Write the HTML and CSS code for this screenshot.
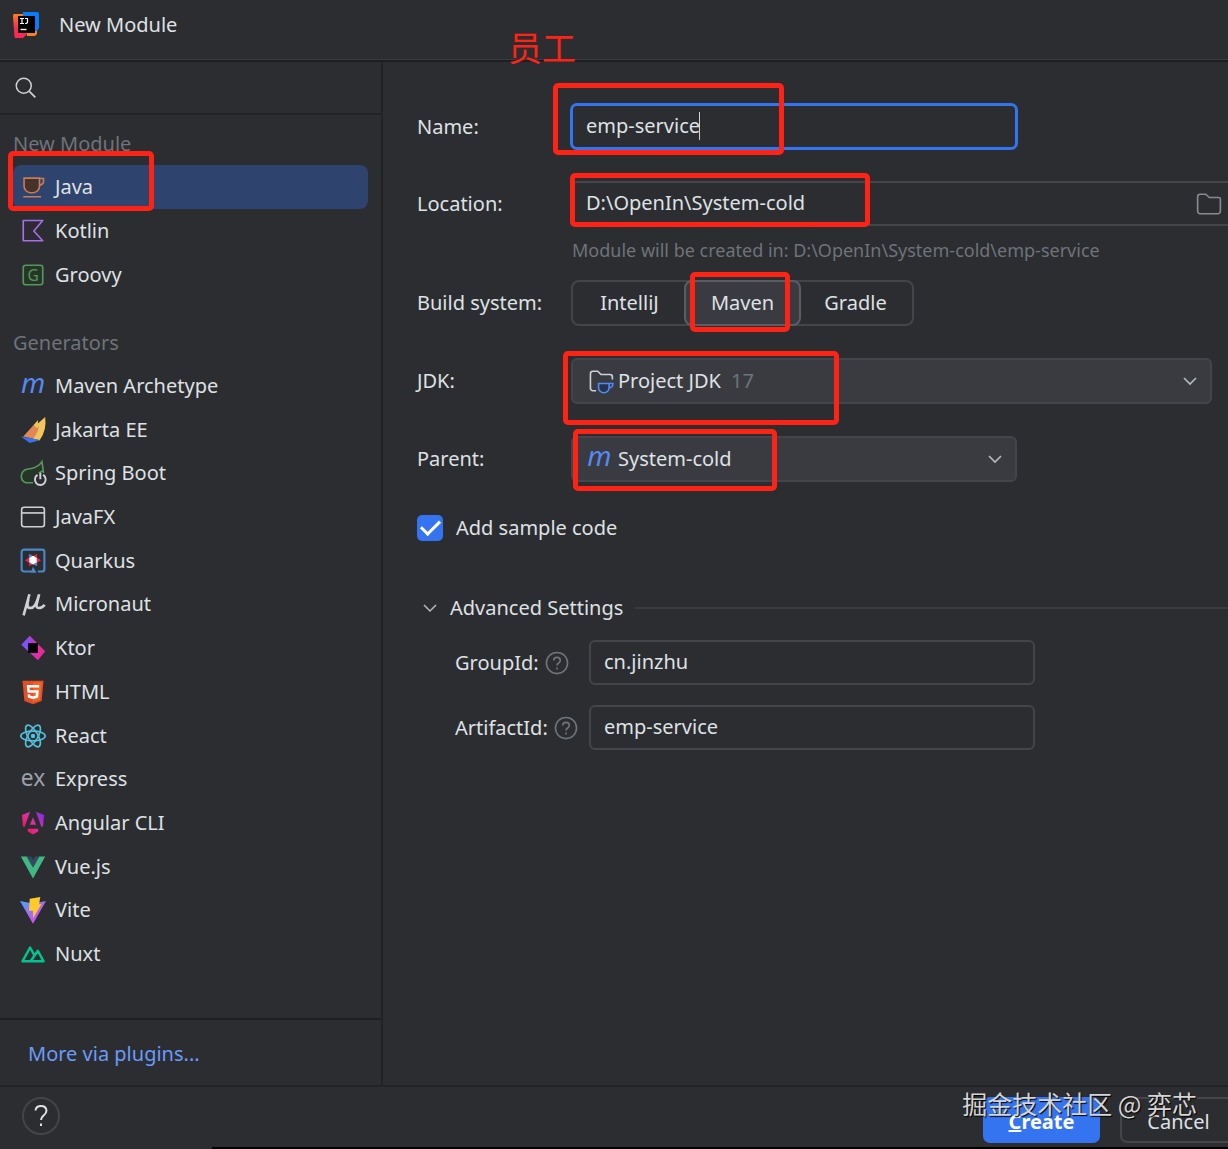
FILE: index.html
```html
<!DOCTYPE html>
<html lang="en">
<head>
    <meta charset="UTF-8">
    <meta name="viewport" content="width=device-width, initial-scale=1.0">
    <title>New Module</title>
    <link rel="stylesheet" href="styles.css">
</head>
<body>
    <header class="titlebar">
        <svg class="logo" viewBox="0 0 28 28" aria-hidden="true">
            <defs>
                <linearGradient id="ij-left" x1="0" y1="0" x2="0" y2="1">
                    <stop offset="0" stop-color="#fc801d"/>
                    <stop offset="0.6" stop-color="#fe2857"/>
                </linearGradient>
            </defs>
            <path fill="url(#ij-left)" d="M2 3h10v23l-8 1q-1.500 0-1.600-1.500L1 5q0-2 1-2z"/>
            <path fill="#fe2857" d="M4 20h14l-4 4-3 3H4z"/>
            <path fill="#fc801d" d="M15 20h10v3l-2 2h-8z"/>
            <path fill="#087cfa" d="M11 1h14q2 0 2 2v14l-2 3H11z"/>
            <rect x="6" y="5" width="17" height="17" fill="#000"/>
            <path d="M8 7.500h4M10 7.500v5M8 12.500h4M13 7.500h3M15.500 7.500v3.500q0 1.500-2.500 1.500" fill="none" stroke="#fff" stroke-width="1.200"/>
            <path d="M8.500 18.500h6" stroke="#fff" stroke-width="1.400"/>
        </svg>
        <h1>New Module</h1>
    </header>

    <div class="content">
        <aside class="sidebar">
            <label class="search">
                <svg viewBox="0 0 16 16" aria-hidden="true"><circle cx="6.500" cy="6.500" r="5" fill="none" stroke="#ced0d6"/><path d="M10.200 10.200l4 4" stroke="#ced0d6" stroke-width="1.200"/></svg>
                <input type="text" aria-label="Search">
            </label>

            <nav class="types">
                <h2>New Module</h2>
                <ul>
                    <li><a href="#" class="selected">
                        <svg class="icon" viewBox="0 0 16 16"><path d="M2.500 2.500h9.500v5a4 4 0 0 1-4 4h-1.500a4 4 0 0 1-4-4z" fill="#45322b" stroke="#c77d55"/><path d="M12 2.800h2.500v1.700q0 2-2.800 2.500M2 14h11" fill="none" stroke="#c77d55"/></svg>
                        Java</a></li>
                    <li><a href="#">
                        <svg class="icon" viewBox="0 0 16 16"><path d="M2 1.500h12L8.500 8l5.500 6H2z" fill="#2f2936" stroke="#a571e6" stroke-linejoin="round"/></svg>
                        Kotlin</a></li>
                    <li><a href="#">
                        <svg class="icon" viewBox="0 0 16 16"><rect x="2" y="2" width="12" height="12" rx="1.500" fill="#253627" stroke="#57965c"/><text x="8" y="11.400" text-anchor="middle" font-size="9.500" fill="#57965c">G</text></svg>
                        Groovy</a></li>
                </ul>

                <h2 class="second">Generators</h2>
                <ul class="generators">
                    <li><a href="#">
                        <svg class="icon" viewBox="0 0 16 16"><text class="slanted" x="8" y="12" text-anchor="middle" font-size="17" fill="#548af7">m</text></svg>
                        Maven Archetype</a></li>
                    <li><a href="#">
                        <svg class="icon" viewBox="0 0 16 16"><path d="M2 12L11 2v10.500l-2 1z" fill="#e08855"/><path d="M8.500 5L11 2v5z" fill="#f2c55c"/><path d="M15.500 0q1.200 8-3.500 14.500l-4-1Q12 9 11 4z" fill="#f2c55c"/><path d="M.5 12l11.500 2q-2 1-3 1.200L6 16z" fill="#3574f0"/></svg>
                        Jakarta EE</a></li>
                    <li><a href="#">
                        <svg class="icon" viewBox="0 0 16 16"><path d="M13.500 1l1 7M8 14H3.500Q.8 13 .8 10 1 6 5 5.500 11 5 13.500 1l.8 5.500Q9 9 8.500 14z" fill="#253627" stroke="#57965c"/><path d="M8 8h8v8H8z" fill="#2b2d30"/><path d="M10.800 9.200a3.300 3.300 0 1 0 3.400 0M12.500 7.800v4" fill="none" stroke="#ced0d6" stroke-width="1.200"/></svg>
                        Spring Boot</a></li>
                    <li><a href="#">
                        <svg class="icon" viewBox="0 0 16 16"><rect x="1" y="2" width="14" height="12" rx="1.500" fill="none" stroke="#ced0d6"/><path d="M1 5.500h14" stroke="#ced0d6"/></svg>
                        JavaFX</a></li>
                    <li><a href="#">
                        <svg class="icon" viewBox="0 0 16 16"><path d="M7 14.500H2.500a1.500 1.500 0 0 1-1.500-1.500V2.500A1.500 1.500 0 0 1 2.500 1h11A1.500 1.500 0 0 1 15 2.500V13a1.500 1.500 0 0 1-1.500 1.500H11" fill="none" stroke="#4a88c7" stroke-width="1.300"/><path d="M8 11.500l2.200 3.700H6.500z" fill="#4a88c7"/><path d="M5.500 3.500L8 5l2.500-1.500V6l2.500 1.500L10.500 9v2L8 10l-2.500 1V9L3 7.500 5.500 6z" fill="#e8274b"/><path d="M5.500 3.500L8 5 5.500 6.500zM10.500 11L8 10l2.500-1.500z" fill="#4a88c7"/><path d="M8 4.700l2.300 1.400v2.700L8 10.200 5.700 8.800V6.100z" fill="#fff"/></svg>
                        Quarkus</a></li>
                    <li><a href="#">
                        <svg class="icon" viewBox="0 0 16 16"><path d="M5.800 2L2.200 15M5.200 5Q3.500 10.500 6.500 10.500 9.500 10.500 11.500 3M11.800 2L10.300 8Q9.700 10.500 11.500 10.500 13.500 10.500 15.200 8.500" fill="none" stroke="#ced0d6" stroke-width="1.600"/></svg>
                        Micronaut</a></li>
                    <li><a href="#">
                        <svg class="icon" viewBox="0 0 16 16"><defs><linearGradient id="ktor"><stop offset="0.200" stop-color="#7f52ff"/><stop offset="0.700" stop-color="#e72b99"/></linearGradient></defs><path d="M6 .5L15.500 10 11 15.500.8 6z" fill="url(#ktor)"/><path d="M5 5h6v6H5z" fill="#000"/></svg>
                        Ktor</a></li>
                    <li><a href="#">
                        <svg class="icon" viewBox="0 0 16 16"><path d="M1.500 1h13l-1.200 12.500L8 15.500l-5.300-2z" fill="#e44d26"/><path d="M8 2h5.400l-1 10.700L8 14.300z" fill="#f16529"/><path d="M11.800 4.500H5l.3 3.200h5.400l-.3 3.100-2.400.8-2.400-.8-.1-1.300" fill="none" stroke="#fff" stroke-width="1.600"/></svg>
                        HTML</a></li>
                    <li><a href="#">
                        <svg class="icon" viewBox="0 0 16 16"><g fill="none" stroke="#53c1de"><ellipse cx="8" cy="8" rx="7.500" ry="3"/><ellipse cx="8" cy="8" rx="7.500" ry="3" transform="rotate(60 8 8)"/><ellipse cx="8" cy="8" rx="7.500" ry="3" transform="rotate(120 8 8)"/></g><circle cx="8" cy="8" r="1.400" fill="#53c1de"/></svg>
                        React</a></li>
                    <li><a href="#">
                        <svg class="icon" viewBox="0 0 16 16"><text x="8" y="12" text-anchor="middle" font-size="14" fill="#9da0a8">ex</text></svg>
                        Express</a></li>
                    <li><a href="#">
                        <svg class="icon" viewBox="0 0 16 16"><defs><linearGradient id="ng" gradientUnits="userSpaceOnUse" x1="2" y1="12" x2="14" y2="3"><stop offset="0" stop-color="#f0145a"/><stop offset="0.500" stop-color="#e02fa0"/><stop offset="1" stop-color="#8a2be8"/></linearGradient></defs><path d="M1.200 3L6.200 1 2.800 10.500 1.800 10zM14.800 3L9.800 1l3.400 9.500 1-.5zM8 4.500l1.900 4.500H6.100zM4.800 11.500h6.400v1.700L8 15l-3.200-1.800z" fill="url(#ng)"/></svg>
                        Angular CLI</a></li>
                    <li><a href="#">
                        <svg class="icon" viewBox="0 0 16 16"><path d="M.5 1.500h4L8 7.500l3.500-6h4L8 15z" fill="#41b883"/><path d="M4 1.500h2.700L8 3.500l1.300-2H12L8 8.500z" fill="#35495e"/></svg>
                        Vue.js</a></li>
                    <li><a href="#">
                        <svg class="icon" viewBox="0 0 16 16"><defs><linearGradient id="vite" x1="0" y1="0" x2="1" y2="1"><stop offset="0" stop-color="#41a8ff"/><stop offset="0.600" stop-color="#bd5cf5"/></linearGradient></defs><path d="M0 2.500L8 4l8-1.500L8 16.500z" fill="url(#vite)"/><path d="M6 1l6.500-1-.8 4.500h1.500L8 13V8.500H5.500z" fill="#ffca28"/></svg>
                        Vite</a></li>
                    <li><a href="#">
                        <svg class="icon" viewBox="0 0 16 16"><path d="M7.500 12.500H1.500L6.200 4l2.500 4.500M6.500 12.500h8L11 6z" fill="none" stroke="#00c58e" stroke-width="1.500" stroke-linejoin="round"/></svg>
                        Nuxt</a></li>
                </ul>
            </nav>

            <div class="plugins"><a href="#">More via plugins...</a></div>
        </aside>

        <main class="form">
            <div class="row">
                <label for="name">Name:</label>
                <div class="control focused">
                    <input id="name" type="text" value="emp-service">
                    <span class="caret"></span>
                </div>
            </div>
            <div class="row location">
                <label for="location">Location:</label>
                <div class="control">
                    <input id="location" type="text" value="D:\OpenIn\System-cold">
                    <svg class="icon browse" viewBox="0 0 16 16"><path d="M1 3.500A1.500 1.500 0 0 1 2.500 2H6l2.200 2H14a1 1 0 0 1 1 1v7.500a1.500 1.500 0 0 1-1.500 1.500h-11A1.500 1.500 0 0 1 1 12.500z" fill="none" stroke="#868a91"/></svg>
                </div>
            </div>
            <p class="hint">Module will be created in: D:\OpenIn\System-cold\emp-service</p>
            <div class="row" role="radiogroup" aria-labelledby="build">
                <span id="build">Build system:</span>
                <div class="segments">
                    <label><input type="radio" name="build"><span>IntelliJ</span></label>
                    <label><input type="radio" name="build" checked><span>Maven</span></label>
                    <label><input type="radio" name="build"><span>Gradle</span></label>
                </div>
            </div>
            <div class="row">
                <label for="jdk">JDK:</label>
                <div class="control wide">
                    <select id="jdk"><option>Project JDK</option></select>
                    <svg class="icon lead" viewBox="0 0 16 16"><path d="M5 14H3a1.500 1.500 0 0 1-1.500-1.500v-9A1.500 1.500 0 0 1 3 2h3l2 2h5.500A1.500 1.500 0 0 1 15 5.500V7" fill="none" stroke="#ced0d6"/><path d="M6.500 9.500H13v2.500a3.200 3.200 0 0 1-6.500 0zM13 9.500h2.300q.2 2.500-2.300 2.800" fill="#25324d" stroke="#548af7"/></svg>
                    <span class="version">17</span>
                    <svg class="chevron" viewBox="0 0 16 16"><path d="M2 5l6 6 6-6" fill="none" stroke="#b4b8bf" stroke-width="1.700"/></svg>
                </div>
            </div>
            <div class="row">
                <label for="parent">Parent:</label>
                <div class="control">
                    <select id="parent"><option>System-cold</option></select>
                    <svg class="icon lead" viewBox="0 0 16 16"><text class="slanted" x="7" y="12" text-anchor="middle" font-size="17" fill="#548af7">m</text></svg>
                    <svg class="chevron" viewBox="0 0 16 16"><path d="M2 5l6 6 6-6" fill="none" stroke="#b4b8bf" stroke-width="1.700"/></svg>
                </div>
            </div>
            <label class="check"><input type="checkbox" checked>Add sample code</label>

            <details open>
                <summary>
                    <svg class="chevron" viewBox="0 0 16 16"><path d="M2 5l6 6 6-6" fill="none" stroke="#b4b8bf" stroke-width="1.500"/></svg>
                    Advanced Settings
                </summary>
                <div class="row">
                    <div class="label"><label for="group">GroupId:</label><svg class="icon" viewBox="0 0 16 16"><circle cx="8" cy="8" r="6.500" fill="none" stroke="#6f737a"/><path d="M6 6.500q0-2 2-2t2 1.800q0 1-1 1.700T8 9.500M8 10.800V12" fill="none" stroke="#6f737a"/></svg></div>
                    <div class="control"><input id="group" type="text" value="cn.jinzhu"></div>
                </div>
                <div class="row">
                    <div class="label"><label for="artifact">ArtifactId:</label><svg class="icon" viewBox="0 0 16 16"><circle cx="8" cy="8" r="6.500" fill="none" stroke="#6f737a"/><path d="M6 6.500q0-2 2-2t2 1.800q0 1-1 1.700T8 9.500M8 10.800V12" fill="none" stroke="#6f737a"/></svg></div>
                    <div class="control"><input id="artifact" type="text" value="emp-service"></div>
                </div>
            </details>
        </main>
    </div>

    <footer class="actions">
        <button type="button" class="help" aria-label="Help"><svg viewBox="0 0 16 24"><path d="M2.500 6.500Q3 2 8 2t5.500 4.500q0 2.500-2.700 4.800T8 16M8 19.500v2.500" fill="none" stroke="#dfe1e5" stroke-width="2"/></svg></button>
        <button type="button" class="create"><u>C</u>reate</button>
        <button type="button" class="cancel">Cancel</button>
    </footer>

    <!-- annotations -->
    <div class="mark mark-java"></div>
    <div class="mark mark-name"></div>
    <div class="mark mark-location"></div>
    <div class="mark mark-maven"></div>
    <div class="mark mark-jdk"></div>
    <div class="mark mark-parent"></div>
    <span class="note" lang="zh">员工</span>
    <span class="watermark" lang="zh">掘金技术社区 @ 弈芯</span>
</body>
</html>
```
FILE: styles.css
```css
* {
    box-sizing: border-box;
}
body {
    position: relative;
    display: flex;
    flex-direction: column;
    min-height: 100vh;
    margin: 0;
    overflow-x: hidden;
    background-color: #2b2d30;
    color: #dfe1e5;
    font-family: "Noto Sans", "Noto Sans CJK SC", sans-serif;
    font-size: 20px;
    line-height: 28px;
}
h1, h2, p, ul {
    margin: 0;
    padding: 0;
    font-size: 20px;
    font-weight: normal;
}
ul {
    list-style: none;
}
input, select, button {
    font: inherit;
    color: inherit;
}
.icon {
    flex: none;
    width: 26px;
    height: 26px;
    overflow: visible;
}
.slanted {
    font-style: italic;
}

/* title bar */
.titlebar {
    display: flex;
    align-items: center;
    gap: 19px;
    height: 62px;
    padding: 0 12px 10px;
    border-bottom: 2px solid #1e1f22;
    box-shadow: inset 0 -1px #393b40;
}
.logo {
    width: 28px;
    height: 28px;
}

.content {
    display: flex;
    flex: 1;
}

/* sidebar */
.sidebar {
    display: flex;
    flex: none;
    flex-direction: column;
    width: 383px;
    border-right: 2px solid #212326;
}
.search {
    display: flex;
    align-items: center;
    gap: 12px;
    height: 53px;
    padding-left: 14px;
    border-bottom: 2px solid #212326;
}
.search svg {
    width: 24px;
    height: 24px;
}
.search input {
    flex: 1;
    border: 0;
    outline: 0;
    background: none;
}
.types {
    display: flex;
    flex: 1;
    flex-direction: column;
    padding: 15px 13px 42px;
}
.types h2 {
    margin-bottom: 7px;
    color: #6f737a;
}
.types .second {
    margin-top: 32px;
}
.types ul {
    display: grid;
    grid-auto-rows: 44px;
}
.types .generators {
    flex: 1;
    grid-auto-rows: 1fr;
}
.types a {
    display: flex;
    align-items: center;
    gap: 9px;
    height: 100%;
    padding-left: 7px;
    border-radius: 8px;
    color: inherit;
    text-decoration: none;
}
.types .selected {
    background-color: #2e436e;
}
.plugins {
    display: flex;
    align-items: center;
    height: 67px;
    padding: 2px 28px 0;
    border-top: 2px solid #1e1f22;
}
.plugins a {
    color: #6b9bfa;
    text-decoration: none;
}

/* form */
.form {
    flex: 1;
    min-width: 0;
    padding: 42px 16px 32px 34px;
}
.row {
    display: grid;
    grid-template-columns: 154px 1fr;
    align-items: center;
    margin-bottom: 32px;
}
.control {
    position: relative;
    max-width: 446px;
}
.control.wide {
    max-width: none;
}
.control input, .control select {
    display: block;
    width: 100%;
    height: 45px;
    padding: 0 13px 2px;
    border: 2px solid #43454a;
    border-radius: 6px;
    outline: 0;
    background-color: #2b2d30;
}
.control select {
    height: 46px;
    padding: 0 45px;
    background-color: #393b40;
    appearance: none;
}
.focused input {
    border-color: #3574f0;
    box-shadow: 0 0 0 1px #3574f0;
}
.caret {
    position: absolute;
    top: 8px;
    left: 128px;
    width: 1px;
    height: 28px;
    background-color: #ced0d6;
}
.location {
    margin-bottom: 0;
}
.location .control {
    max-width: none;
    margin-right: -32px;
}
.browse {
    position: absolute;
    top: 10px;
    right: 22px;
}
.hint {
    padding: 10px 0 16px 155px;
    color: #6f737a;
    font-size: 18px;
}
.segments {
    display: flex;
    width: 343px;
    height: 46px;
    border: 2px solid #43454a;
    border-radius: 8px;
}
.segments label {
    flex: 1;
}
.segments input {
    position: absolute;
    opacity: 0;
}
.segments span {
    display: block;
    margin: -2px;
    border: 2px solid transparent;
    border-radius: 8px;
    line-height: 42px;
    text-align: center;
}
.segments input:checked + span {
    border-color: #5a5d63;
    background-color: #393b40;
}
.lead {
    position: absolute;
    top: 10px;
    left: 17px;
    pointer-events: none;
}
.version {
    position: absolute;
    top: 9px;
    left: 160px;
    color: #6f737a;
    pointer-events: none;
}
.chevron {
    width: 16px;
    height: 16px;
}
.control .chevron {
    position: absolute;
    top: 15px;
    right: 14px;
    pointer-events: none;
}
.check {
    display: flex;
    align-items: center;
    gap: 13px;
    width: max-content;
}
.check input {
    display: grid;
    place-items: center;
    width: 26px;
    height: 26px;
    margin: 0;
    border-radius: 5px;
    background-color: #3574f0;
    appearance: none;
}
.check input:checked::before {
    content: "";
    width: 16px;
    height: 8px;
    margin-bottom: 5px;
    border: solid #fff;
    border-width: 0 0 3px 3px;
    transform: rotate(-45deg);
}
details {
    margin: 52px -16px 0 0;
}
summary {
    display: flex;
    align-items: center;
    gap: 12px;
    margin-bottom: 18px;
    padding-left: 5px;
    list-style: none;
}
summary::after {
    content: "";
    flex: 1;
    height: 2px;
    background-color: #393b40;
}
details .row {
    grid-template-columns: 134px 1fr;
    margin-bottom: 20px;
    padding-left: 38px;
}
.label {
    display: flex;
    align-items: center;
    gap: 5px;
}

/* bottom buttons */
.actions {
    position: relative;
    display: flex;
    align-items: center;
    gap: 20px;
    height: 64px;
    margin-right: -9px;
    padding: 0 0 4px 22px;
    border-top: 2px solid #212326;
}
.actions::after {
    content: "";
    position: absolute;
    right: 0;
    bottom: 0;
    left: 212px;
    height: 2px;
    background-color: #000;
}
.actions button {
    width: 117px;
    height: 46px;
    margin-top: 8px;
    padding: 3px 0 0;
    border: 2px solid #43454a;
    border-radius: 7px;
    background: none;
}
.actions .help {
    width: 38px;
    height: 38px;
    margin: 0 auto 0 0;
    padding: 0;
    border-radius: 50%;
}
.help svg {
    display: block;
    width: 16px;
    height: 24px;
    margin: auto;
}
.actions .create {
    border: 0;
    background-color: #3574f0;
    color: #fff;
    font-weight: bold;
}

/* red boxes and captions drawn over the dialog */
.mark {
    position: absolute;
    border: 5px solid #ff2316;
    border-radius: 5px;
    pointer-events: none;
}
.mark-java {
    top: 151px;
    left: 8px;
    width: 146px;
    height: 60px;
}
.mark-name {
    top: 83px;
    left: 553px;
    width: 231px;
    height: 72px;
}
.mark-location {
    top: 173px;
    left: 570px;
    width: 300px;
    height: 54px;
}
.mark-maven {
    top: 272px;
    left: 690px;
    width: 100px;
    height: 60px;
}
.mark-jdk {
    top: 351px;
    left: 563px;
    width: 276px;
    height: 74px;
}
.mark-parent {
    top: 429px;
    left: 573px;
    width: 204px;
    height: 62px;
}
.note {
    position: absolute;
    top: 29px;
    left: 508px;
    color: #ff2316;
    font-family: "Noto Sans CJK SC", sans-serif;
    font-size: 34px;
    line-height: 36px;
}
.watermark {
    position: absolute;
    right: 31px;
    bottom: 31px;
    color: #d5d5d6;
    font-family: "Noto Sans CJK SC", sans-serif;
    font-size: 25px;
    line-height: 30px;
    text-shadow: 1px 1px 1px #000;
    white-space: nowrap;
    pointer-events: none;
}
```
